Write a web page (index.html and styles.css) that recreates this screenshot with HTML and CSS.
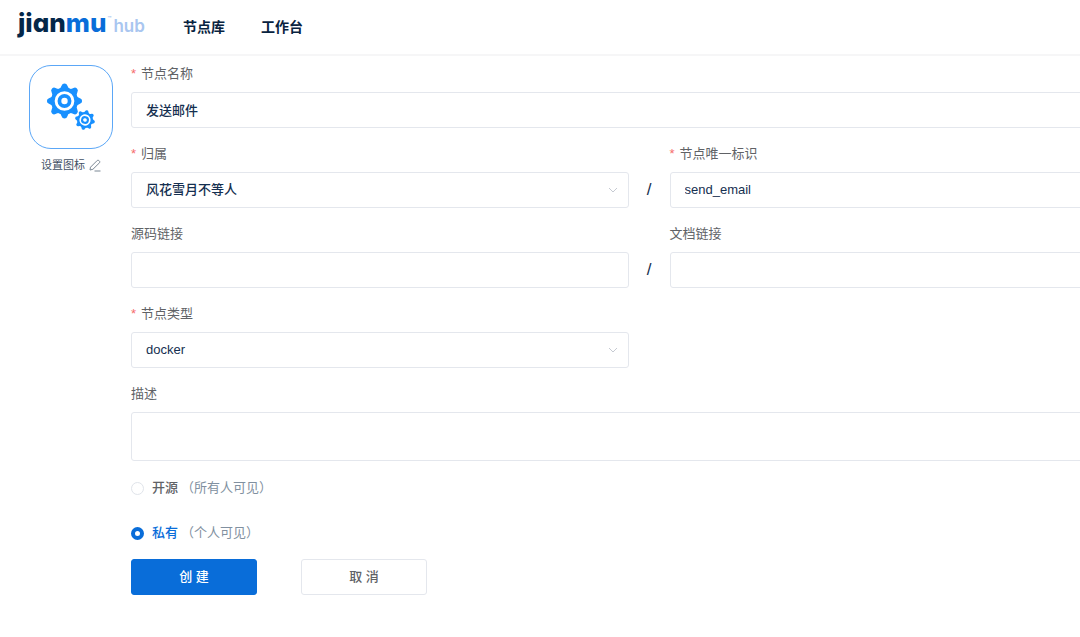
FILE: index.html
```html
<!DOCTYPE html>
<html lang="zh-CN">
<head>
<meta charset="utf-8">
<meta name="viewport" content="width=device-width, initial-scale=1">
<title>jianmu hub</title>
<link rel="stylesheet" href="styles.css">
</head>
<body>
<header class="header">
  <a class="logo" href="#" aria-label="jianmu hub">
    <span class="logo-dark">jian</span><span class="logo-blue">mu</span><span class="logo-tm">™</span><span class="logo-hub">hub</span>
  </a>
  <nav class="nav">
    <a href="#">节点库</a>
    <a href="#">工作台</a>
  </nav>
</header>
<main class="page">
  <aside class="icon-panel">
    <button type="button" class="icon-box" aria-label="节点图标">
      <svg width="84" height="84" viewBox="0 0 84 84" aria-hidden="true">
        <defs>
          <path id="tooth" d="M-7 -10.5Q-3.600 -12.500 -2.800 -15.500Q-2.300 -17.600 0 -17.600Q2.300 -17.600 2.800 -15.500Q3.600 -12.500 7 -10.500Z"/>
          <g id="gear">
            <circle r="13.500"/>
            <use href="#tooth"/>
            <use href="#tooth" transform="rotate(45)"/>
            <use href="#tooth" transform="rotate(90)"/>
            <use href="#tooth" transform="rotate(135)"/>
            <use href="#tooth" transform="rotate(180)"/>
            <use href="#tooth" transform="rotate(225)"/>
            <use href="#tooth" transform="rotate(270)"/>
            <use href="#tooth" transform="rotate(315)"/>
            <circle r="8.400" fill="none" stroke="#fff" stroke-width="2.900"/>
            <circle r="3.200" fill="#fff"/>
          </g>
        </defs>
        <use href="#gear" fill="#1890ff" transform="translate(35.500 36)"/>
        <use href="#gear" fill="#1890ff" transform="translate(56 55) rotate(12) scale(.57)"/>
      </svg>
    </button>
    <button type="button" class="icon-edit">设置图标
      <svg width="12" height="13" viewBox="0 0 12 13" fill="none" stroke="#7b8794" stroke-width="1" stroke-linejoin="round" aria-hidden="true">
        <path d="M1.500 8.200L8.300 1.400Q9 .8 9.700 1.400L10.600 2.300Q11.200 3 10.600 3.700L3.900 10.300L1 11Z"/>
        <path d="M5.500 12H11.500"/>
      </svg>
    </button>
  </aside>
  <form class="form">
    <div class="field wide">
      <label class="required" for="name">节点名称</label>
      <input id="name" type="text" value="发送邮件">
    </div>
    <div class="field">
      <label class="required" for="owner">归属</label>
      <div class="select">
        <select id="owner"><option>风花雪月不等人</option></select>
        <svg class="chevron" width="10" height="6" viewBox="0 0 10 6" aria-hidden="true"><path d="M1 1L5 5L9 1"/></svg>
      </div>
    </div>
    <span class="slash">/</span>
    <div class="field">
      <label class="required" for="ref">节点唯一标识</label>
      <input id="ref" type="text" value="send_email">
    </div>
    <div class="field">
      <label for="source">源码链接</label>
      <input id="source" type="text">
    </div>
    <span class="slash">/</span>
    <div class="field">
      <label for="docs">文档链接</label>
      <input id="docs" type="text">
    </div>
    <div class="field first">
      <label class="required" for="type">节点类型</label>
      <div class="select">
        <select id="type"><option>docker</option></select>
        <svg class="chevron" width="10" height="6" viewBox="0 0 10 6" aria-hidden="true"><path d="M1 1L5 5L9 1"/></svg>
      </div>
    </div>
    <div class="field wide">
      <label for="desc">描述</label>
      <textarea id="desc"></textarea>
    </div>
    <div class="visibility wide">
      <label class="radio"><input type="radio" name="visibility"><span class="radio-name">开源</span><span class="radio-note">（所有人可见）</span></label>
      <label class="radio"><input type="radio" name="visibility" checked><span class="radio-name">私有</span><span class="radio-note">（个人可见）</span></label>
    </div>
    <div class="actions wide">
      <button type="submit" class="btn primary">创 建</button>
      <button type="button" class="btn">取 消</button>
    </div>
  </form>
</main>
</body>
</html>
```
FILE: styles.css
```css
* {
  box-sizing: border-box;
}

body {
  margin: 0;
  overflow-x: hidden;
  background: #fff;
  color: #152f50;
  font: 13px/18px "Liberation Sans", "Noto Sans CJK SC", sans-serif;
}

button,
input,
select,
textarea {
  font: inherit;
  color: inherit;
}

.header {
  display: flex;
  align-items: center;
  height: 56px;
  padding: 0 18px;
  border-bottom: 2px solid #f6f6f7;
}

.logo {
  display: flex;
  align-items: baseline;
  width: 129px;
  padding-bottom: 6px;
  font: 800 26px/32px Inter, sans-serif;
  font-feature-settings: "cv11";
  text-decoration: none;
}

.logo-dark {
  color: #042749;
}

.logo-blue {
  color: #096dd9;
}

.logo-tm {
  align-self: flex-start;
  margin: 0 2px 0 1px;
  color: #a9c6f0;
  font-size: 6px;
  line-height: 24px;
}

.logo-hub {
  color: #a9c6f0;
  font-size: 17px;
  font-weight: 600;
}

.nav {
  display: flex;
  gap: 36px;
  margin-left: 36px;
}

.nav a {
  font-size: 14px;
  font-weight: 700;
  text-decoration: none;
  color: #082340;
}

.page {
  display: flex;
  gap: 18px;
  padding: 9px 0 40px 29px;
}

.icon-panel {
  display: flex;
  flex: none;
  flex-direction: column;
  align-items: center;
  gap: 8px;
}

.icon-box {
  display: flex;
  padding: 0;
  border: 1px solid #5ba7f7;
  border-radius: 22px;
  background: #fff;
}

.icon-box svg {
  margin: -1px;
}

.icon-edit {
  display: flex;
  align-items: center;
  gap: 4px;
  padding: 0;
  border: 0;
  background: none;
  color: #3f4f63;
  font-size: 11px;
  line-height: 16px;
}

/* The form runs past the right edge of the window. */
.form {
  display: grid;
  flex: 1;
  grid-template-columns: 1fr 41px 1fr;
  row-gap: 17px;
  margin-right: -87px;
}

.wide {
  grid-column: 1 / -1;
}

.first {
  grid-column: 1;
}

.field {
  display: flex;
  flex-direction: column;
  gap: 9px;
}

.field label {
  color: #606266;
}

.required::before {
  content: "*";
  margin-right: 5px;
  color: #f56c6c;
}

.field input,
.field select,
.field textarea {
  display: block;
  width: 100%;
  height: 36px;
  padding: 0 14px 1px;
  border: 1px solid #e4e7ed;
  border-radius: 3px;
  background: #fff;
  outline: 0;
  font-weight: 500;
}

.field select {
  padding-bottom: 0;
  appearance: none;
}

.field textarea {
  height: 49px;
  resize: none;
}

.select {
  position: relative;
}

.chevron {
  position: absolute;
  top: 15px;
  right: 11px;
  fill: none;
  stroke: #c6cad2;
  pointer-events: none;
}

.slash {
  align-self: end;
  font-size: 17px;
  line-height: 36px;
  text-align: center;
}

.visibility {
  display: flex;
  flex-direction: column;
  align-items: flex-start;
  gap: 27px;
  padding-top: 1px;
}

.radio {
  display: flex;
  align-items: center;
}

.radio input {
  width: 13px;
  height: 13px;
  margin: 0 8px 0 0;
  border: 1px solid #e0e4ea;
  border-radius: 50%;
  appearance: none;
}

.radio input:checked {
  border: 4px solid #096dd9;
}

.radio-name {
  margin-right: 3px;
  color: #606266;
  font-weight: 500;
}

.radio input:checked + .radio-name {
  color: #096dd9;
}

.radio-note {
  color: #8190a0;
}

.actions {
  display: flex;
  gap: 44px;
}

.btn {
  width: 126px;
  height: 36px;
  padding: 0;
  border: 1px solid #e4e7ed;
  border-radius: 3px;
  background: #fff;
  color: #606266;
  font-weight: 500;
}

.primary {
  border-color: #096dd9;
  background: #096dd9;
  color: #fff;
}
```
